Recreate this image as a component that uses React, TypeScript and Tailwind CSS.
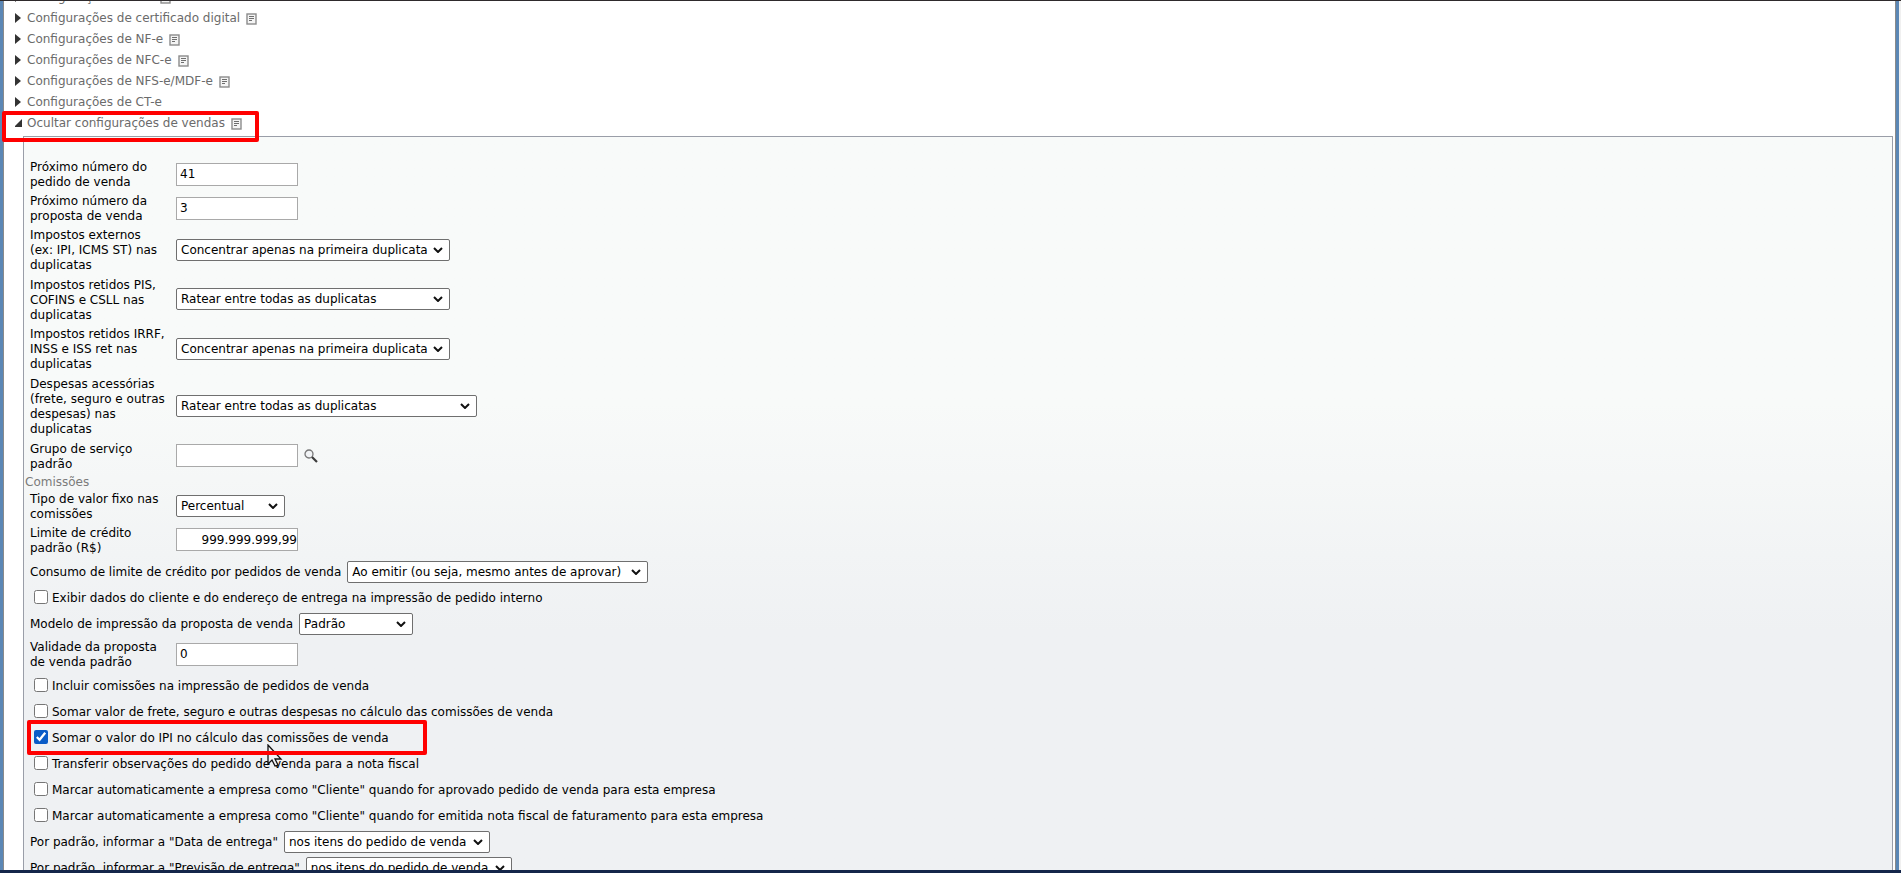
import { useId } from "react";
import type { ReactNode } from "react";

const sections = [
  { title: "Configurações fiscais", note: true },
  { title: "Configurações de certificado digital", note: true },
  { title: "Configurações de NF-e", note: true },
  { title: "Configurações de NFC-e", note: true },
  { title: "Configurações de NFS-e/MDF-e", note: true },
  { title: "Configurações de CT-e", note: false },
];

function NoteIcon() {
  return (
    <svg width="11" height="12" viewBox="0 0 11 12" className="mt-[2px] shrink-0" fill="none">
      <rect x="1" y="1" width="9" height="10" fill="#f4f4f4" stroke="#8c8c8c" strokeWidth="1.4" />
      <path d="M3 3.5h5M3 5.5h5M3 7.5h3" stroke="#6e6e6e" />
    </svg>
  );
}

function SearchIcon() {
  return (
    <svg width="14" height="14" viewBox="0 0 14 14" fill="none">
      <circle cx="5" cy="5" r="4" fill="#f2f4f6" stroke="#777" strokeWidth="1.3" />
      <path d="M8 8l5 5" stroke="#3c3c3c" strokeWidth="2.2" />
    </svg>
  );
}

function SectionLink({ title, note, open }: { title: string; note: boolean; open?: boolean }) {
  return (
    <a href="#" className="flex h-[21px] items-center text-[#6b6b6b]">
      <svg width="12" height="10" viewBox="0 0 12 10" className="shrink-0" fill="#333">
        {open ? <path d="M-1 9L7 1v8z" /> : <path d="M0 0l6 5-6 5z" />}
      </svg>
      <span>{title}</span>
      {note && <span className="ml-[6px]"><NoteIcon /></span>}
    </a>
  );
}

function Select({ id, value, width }: { id: string; value: string; width: string }) {
  return (
    <span className={"relative inline-flex " + width}>
      <select id={id} className="h-[22px] w-full appearance-none rounded-xs border border-[#6f6f6f] bg-white pl-1 leading-4">
        <option>{value}</option>
      </select>
      <svg width="10" height="6" viewBox="0 0 10 6" className="pointer-events-none absolute right-[7px] top-2" fill="none">
        <path d="M1 1l4 4 4-4" stroke="#111" strokeWidth="2" />
      </svg>
    </span>
  );
}

function Input({ id, value, right }: { id: string; value: string; right?: boolean }) {
  return (
    <input
      id={id}
      type="text"
      defaultValue={value}
      className={"h-[23px] w-[122px] border border-[#a9a9a9] bg-white " + (right ? "text-right" : "px-[3px]")}
    />
  );
}

// label column + control
function Field({ label, height, text, select, width, right, children }: {
  label: string[];
  height: string;
  text?: string;
  select?: string;
  width?: string;
  right?: boolean;
  children?: ReactNode;
}) {
  const id = useId();
  return (
    <div className={"flex items-center " + height}>
      <label htmlFor={id} className="w-[146px] shrink-0 whitespace-nowrap leading-[15px]">
        {label.map((line) => <span key={line} className="block">{line}</span>)}
      </label>
      <div className="flex items-center pb-[2px]">
        {select ? <Select id={id} value={select} width={width ?? "w-[274px]"} /> : <Input id={id} value={text ?? ""} right={right} />}
        {children}
      </div>
    </div>
  );
}

function InlineSelect({ label, value, width }: { label: string; value: string; width: string }) {
  const id = useId();
  return (
    <div className="flex h-[26px] items-center gap-[6px]">
      <label htmlFor={id}>{label}</label>
      <Select id={id} value={value} width={width} />
    </div>
  );
}

function Check({ label, checked }: { label: string; checked?: boolean }) {
  return (
    <label className="flex h-[26px] items-center gap-1 pl-1">
      <input type="checkbox" defaultChecked={checked} className="mb-[2px] size-[14px] accent-[#0a5cc7]" />
      <span>{label}</span>
    </label>
  );
}

export default function App() {
  return (
    <div className="flex h-screen flex-col overflow-hidden border-b-3 border-t border-b-[#14264a] border-t-[#2e2a2c] bg-[#f0f0f0] pr-[2px] font-['DejaVu_Sans',sans-serif] text-[12px] leading-4 text-black">
      <div className="min-h-0 flex-1 border-x-3 border-[#5b87b5] bg-white">
        <div className="flow-root h-full border-x border-[#8a8a8a] pl-[11px] pr-[2px]">
          <nav className="-mt-[15px]">
            {sections.map((s) => <SectionLink key={s.title} {...s} />)}
            <div className="relative">
              <SectionLink title="Ocultar configurações de vendas" note open />
              <div className="pointer-events-none absolute -left-[13px] -top-[1px] h-[31px] w-[257px] rounded-xs border-4 border-[#ff0000]" />
            </div>
          </nav>
          <form className="ml-2 mt-[3px] border border-[#9a9ea8] bg-linear-to-b from-[#f8faf9] from-35% to-[#eff1f3] to-65% pb-4 pl-[6px] pt-[21px]">
            <Field label={["Próximo número do", "pedido de venda"]} height="h-[34px]" text="41" />
            <Field label={["Próximo número da", "proposta de venda"]} height="h-[34px]" text="3" />
            <Field label={["Impostos externos", "(ex: IPI, ICMS ST) nas", "duplicatas"]} height="h-[49px]" select="Concentrar apenas na primeira duplicata" />
            <Field label={["Impostos retidos PIS,", "COFINS e CSLL nas", "duplicatas"]} height="h-[50px]" select="Ratear entre todas as duplicatas" />
            <Field label={["Impostos retidos IRRF,", "INSS e ISS ret nas", "duplicatas"]} height="h-[49px]" select="Concentrar apenas na primeira duplicata" />
            <Field label={["Despesas acessórias", "(frete, seguro e outras", "despesas) nas", "duplicatas"]} height="h-[65px]" select="Ratear entre todas as duplicatas" width="w-[301px]" />
            <Field label={["Grupo de serviço", "padrão"]} height="h-[35px]">
              <button type="button" aria-label="Pesquisar" className="ml-[6px]"><SearchIcon /></button>
            </Field>
            <h3 className="-ml-[5px] leading-4 text-[#7b7b7b]">Comissões</h3>
            <Field label={["Tipo de valor fixo nas", "comissões"]} height="h-[33px]" select="Percentual" width="w-[109px]" />
            <Field label={["Limite de crédito", "padrão (R$)"]} height="h-[35px]" text="999.999.999,99" right />
            <div className="pt-px">
              <InlineSelect label="Consumo de limite de crédito por pedidos de venda" value="Ao emitir (ou seja, mesmo antes de aprovar)" width="w-[301px]" />
              <Check label="Exibir dados do cliente e do endereço de entrega na impressão de pedido interno" />
              <InlineSelect label="Modelo de impressão da proposta de venda" value="Padrão" width="w-[114px]" />
            </div>
            <Field label={["Validade da proposta", "de venda padrão"]} height="h-[36px]" text="0" />
            <Check label="Incluir comissões na impressão de pedidos de venda" />
            <Check label="Somar valor de frete, seguro e outras despesas no cálculo das comissões de venda" />
            <div className="relative">
              <Check label="Somar o valor do IPI no cálculo das comissões de venda" checked />
              <svg width="16" height="23" viewBox="0 0 16 23" className="pointer-events-none absolute left-[237px] top-[19px]">
                <path d="M1 1v19l4-4 3 6 3-1-3-6h6z" fill="#f0f1f3" stroke="#111" strokeWidth="1.3" />
              </svg>
              <div className="pointer-events-none absolute -left-[3px] -top-[5px] h-[35px] w-[400px] rounded-xs border-4 border-[#ff0000]" />
            </div>
            <Check label="Transferir observações do pedido de venda para a nota fiscal" />
            <Check label={'Marcar automaticamente a empresa como "Cliente" quando for aprovado pedido de venda para esta empresa'} />
            <Check label={'Marcar automaticamente a empresa como "Cliente" quando for emitida nota fiscal de faturamento para esta empresa'} />
            <InlineSelect label={'Por padrão, informar a "Data de entrega"'} value="nos itens do pedido de venda" width="w-[206px]" />
            <InlineSelect label={'Por padrão, informar a "Previsão de entrega"'} value="nos itens do pedido de venda" width="w-[206px]" />
          </form>
        </div>
      </div>
    </div>
  );
}
